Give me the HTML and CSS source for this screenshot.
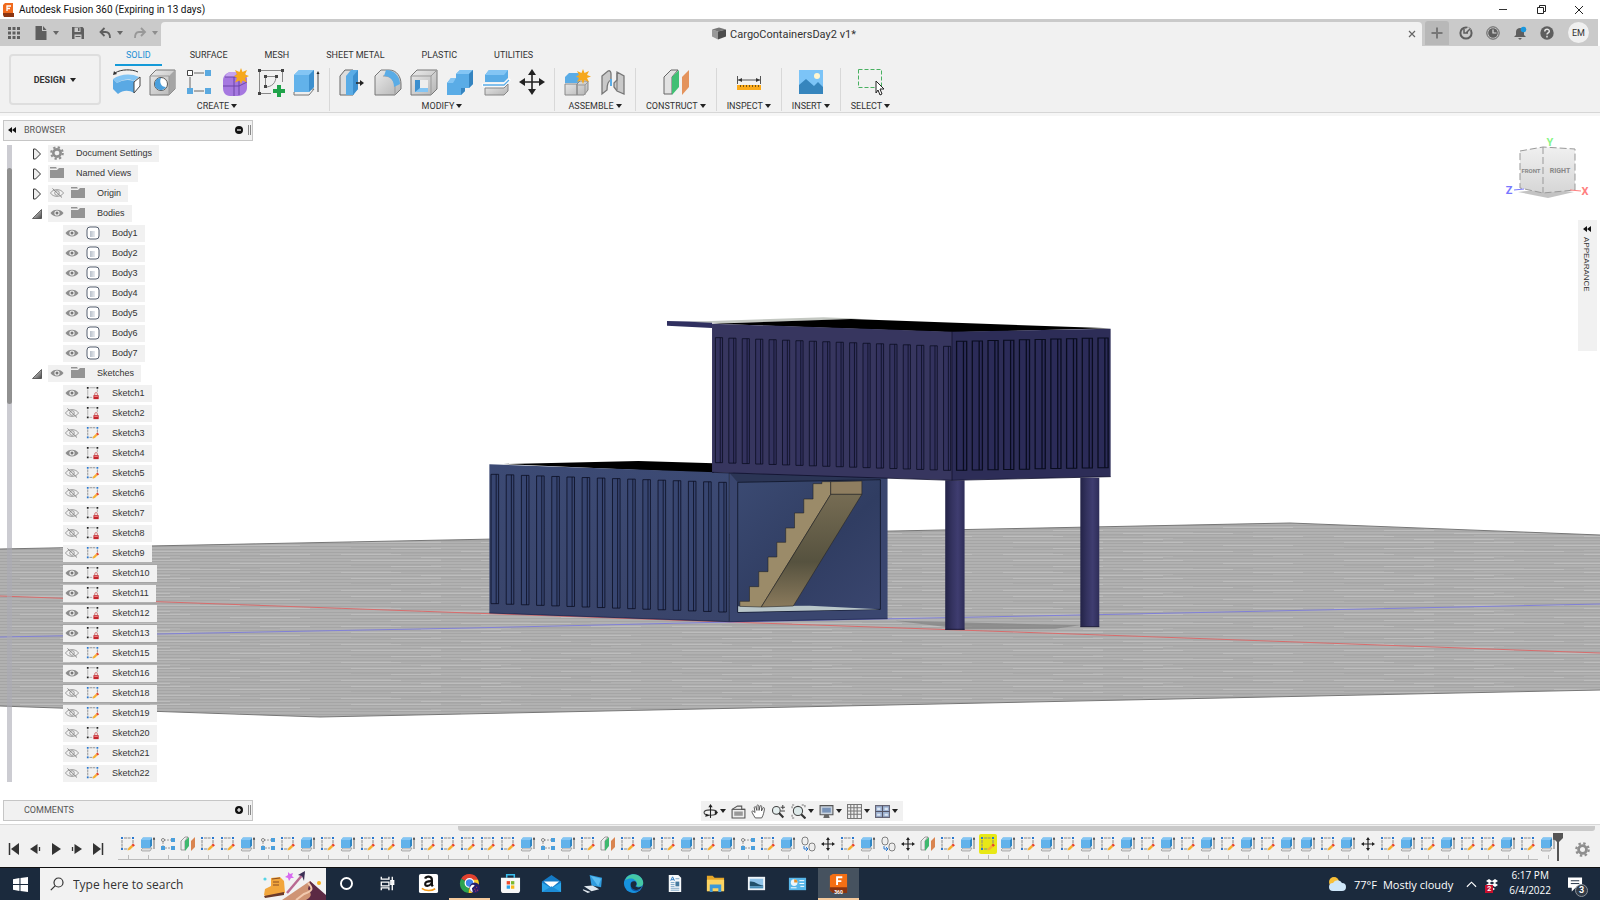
FILE: index.html
```html
<!DOCTYPE html>
<html lang="en">
<head>
<meta charset="utf-8">
<title>Autodesk Fusion 360</title>
<link rel="stylesheet" href="styles.css">
</head>
<body>
<svg class="defs" aria-hidden="true">
  <defs>
    <linearGradient id="gBlue" x1="0" y1="0" x2="1" y2="1"><stop offset="0" stop-color="#6dbbf0"/><stop offset="1" stop-color="#3f97d6"/></linearGradient>
    <linearGradient id="gGrey" x1="0" y1="0" x2="1" y2="1"><stop offset="0" stop-color="#ececec"/><stop offset="1" stop-color="#b4b4b4"/></linearGradient>
    <linearGradient id="gTri" x1="0" y1="0" x2="1" y2="1"><stop offset="0" stop-color="#fff"/><stop offset="1" stop-color="#444"/></linearGradient>
    <linearGradient id="gBody" x1="0" y1="0" x2="1" y2="0"><stop offset="0" stop-color="#b8c0ca"/><stop offset="1" stop-color="#e8ebef"/></linearGradient>
  </defs>
  <symbol id="sketch" viewBox="0 0 16 16"><path d="M2 4v8M4 2h7M13 4v4M4 13h4" fill="none" stroke="#888" stroke-dasharray="3 .6"/><path d="M1 1h2v2H1zM12 1h2v2h-2zM1 12h2v2H1z" fill="#2a78d0"/><path d="M7.500 14.500l.8-2.600 3.200-3 1.800 1.800-3.200 3z" fill="#f8b030"/><path d="M11.500 8.900l1.500-1.400 2 1.800-1.700 1.500z" fill="#e8402c"/></symbol>
  <symbol id="locked" viewBox="0 0 16 16"><path d="M2 4v7M4 2h7M13 4v3M4 13h3" fill="none" stroke="#aaa"/><path d="M1 1h2v2H1zM12 1h2v2h-2zM1 12h2v2H1z" fill="#222"/><path d="M10 10.500V9a1.500 1.500 0 0 1 3 0v1.500" fill="none" stroke="#c66"/><path d="M8.500 10.500h6V15h-6z" fill="#c4242c"/><path d="M9.500 11.500h4v1h-4z" fill="#e88"/></symbol>
  <symbol id="extrude" viewBox="0 0 16 16"><path d="M1 14l2-2h9l-2 3H2z" fill="#ddd" stroke="#888" stroke-width=".6"/><path d="M1 4l2-2.500h9L10 4v8H1z" fill="#62b2ea"/><path d="M10 4l2-2.500v8L10 12z" fill="#2f86c4"/><path d="M1 4l2-2.500h9L10 4z" fill="#83c5f4"/><path d="M14 13V3" stroke="#555" stroke-width=".8"/><path d="M12.800 3.500L14 1l1.200 2.500z" fill="#222"/></symbol>
  <symbol id="pattern" viewBox="0 0 16 16"><path d="M4 4h7M3 6v4M5 12h6" stroke="#999" stroke-dasharray="2 1"/><circle cx="3" cy="4" r="1.500" fill="#fff" stroke="#666" stroke-width=".8"/><path d="M11 2h4v4h-4zM11 10h4v4h-4zM1 10h4v4H1z" fill="#4b9fdc"/></symbol>
  <symbol id="plane" viewBox="0 0 16 16"><path d="M1 5l4-4h3L5 5v9H1z" fill="#eee" stroke="#777" stroke-width=".7"/><path d="M5 5l4-4v9l-4 5z" fill="#3fb86e"/><path d="M11 5l4-4v10l-4 4z" fill="#d98450"/></symbol>
  <symbol id="combine" viewBox="0 0 16 16"><rect x="2" y="1" width="6" height="8" rx="3" fill="#eee" stroke="#666" stroke-width=".8"/><rect x="9" y="7" width="6" height="8" rx="3" fill="#eee" stroke="#666" stroke-width=".8"/><path d="M4 10v3h3M6 11l2 2-2 2" fill="none" stroke="#2a78d0"/></symbol>
  <symbol id="move" viewBox="0 0 16 16"><path d="M8 3v10M3 8h10" stroke="#222" stroke-width="1.200"/><path d="M8 1l2 3H6zM8 15l2-3H6zM1 8l3-2v4zM15 8l-3-2v4z" fill="#222"/></symbol>
  <symbol id="eye" viewBox="0 0 14 12"><path d="M.5 6C3 1.500 11 1.500 13.500 6 11 10.500 3 10.500.5 6z" fill="#8c8c8c"/><circle cx="7" cy="6" r="2.600" fill="#f1f1f1"/><circle cx="7" cy="6" r="1.500" fill="#777"/></symbol>
  <symbol id="eyeoff" viewBox="0 0 14 12"><path d="M.5 6C3 1.500 11 1.500 13.500 6 11 10.500 3 10.500.5 6z" fill="none" stroke="#888" stroke-width=".8"/><circle cx="7" cy="6" r="2.300" fill="none" stroke="#888" stroke-width=".8"/><path d="M2.500 1.500l9.500 9" stroke="#888"/></symbol>
  <symbol id="folder" viewBox="0 0 14 12"><path d="M0 0h6l1 1.500H0zM0 3h7l2-2h5v10H0z" fill="#949494"/></symbol>
  <symbol id="gear" viewBox="0 0 16 16"><circle cx="8" cy="8" r="4.200" fill="none" stroke="#8e8e8e" stroke-width="3"/><circle cx="8" cy="8" r="6.600" fill="none" stroke="#8e8e8e" stroke-width="2.400" stroke-dasharray="2.600 2.580"/></symbol>
  <symbol id="body" viewBox="0 0 14 14"><rect x="1" y="1" width="12" height="12" rx="3" fill="#fff" stroke="#566070"/><path d="M4 5h5v6H4z" fill="url(#gBody)"/></symbol>
  <symbol id="closed" viewBox="0 0 10 12"><path d="M1.500 1h2l5 5-5 5h-2z" fill="#eee" stroke="#333"/></symbol>
  <symbol id="open" viewBox="0 0 10 12"><path d="M9.500 1.500v9H.5z" fill="url(#gTri)" stroke="#333" stroke-width=".7"/></symbol>
  <symbol id="rew" viewBox="0 0 8 6"><path d="M0 3l4-3v6zM4 3l4-3v6z" fill="#111"/></symbol>
</svg>

<header class="titlebar">
  <svg class="s12" viewBox="0 0 12 14"><path d="M1 2l2-2h8v11H1z" fill="#f06a1d"/><path d="M1 10h11v4H2L1 12z" fill="#8c3410"/><path d="M5 8V3h4M5 5.500h3" stroke="#fff" stroke-width="1.300" fill="none"/></svg>
  <h1>Autodesk Fusion 360 (Expiring in 13 days)</h1>
  <div class="winbtns">
    <button aria-label="Minimize"><svg class="s10" viewBox="0 0 10 10"><path d="M1 4.500h8" stroke="#333"/></svg></button>
    <button aria-label="Restore"><svg class="s10" viewBox="0 0 10 10"><path d="M1.500 2.500h6v6h-6zM3.500 2.500v-2h6v6h-2" fill="none" stroke="#222"/></svg></button>
    <button aria-label="Close"><svg class="s10" viewBox="0 0 10 10"><path d="M1 1l8 8M9 1L1 9" stroke="#222"/></svg></button>
  </div>
</header>

<div class="tabbar">
  <div class="quick">
    <button aria-label="Data panel"><svg class="s14" viewBox="0 0 14 14"><path d="M1 1h3v3H1zM5.500 1h3v3h-3zM10 1h3v3h-3zM1 5.500h3v3H1zM5.500 5.500h3v3h-3zM10 5.500h3v3h-3zM1 10h3v3H1zM5.500 10h3v3h-3zM10 10h3v3h-3z" fill="#5e5e5e"/></svg></button>
    <button aria-label="File" class="wide"><svg class="s14" viewBox="0 0 14 14"><path d="M1.500 0H8v5h4.500v9h-11zM9 0l3.500 4H9z" fill="#5e5e5e"/></svg><i class="caret dim"></i></button>
    <button aria-label="Save"><svg class="s14" viewBox="0 0 14 14"><path d="M1 1h10.500L13 2.500V13H1z" fill="#5e5e5e"/><path d="M3.500 1.500h6V6h-6zM3.500 8.500h7V13h-7z" fill="#cacaca"/><path d="M7 2h1.500v3H7zM4.500 10h5v1h-5z" fill="#5e5e5e"/></svg></button>
    <button aria-label="Undo" class="wide"><svg class="s14" viewBox="0 0 14 14"><path d="M6.500 2l-4 4 4 4M3 6h4.500c3 0 4.500 2 4.500 6" fill="none" stroke="#5e5e5e" stroke-width="1.800"/></svg><i class="caret dim"></i></button>
    <button aria-label="Redo" class="wide faded"><svg class="s14" viewBox="0 0 14 14"><path d="M8 2l4 4-4 4M11 6H6c-3 0-4 2-4 6" fill="none" stroke="#777" stroke-width="1.800"/></svg><i class="caret dim"></i></button>
  </div>
  <div class="doctab">
    <div class="docname"><svg class="s14" viewBox="0 0 14 13"><path d="M0 2l6 2v8L0 9z" fill="#999"/><path d="M0 2l7-2 7 2-8 2z" fill="#777"/><path d="M6 4l8-2v7l-8 3z" fill="#4c4c4c"/></svg>CargoContainersDay2 v1*</div>
    <button aria-label="Close tab"><svg class="s10" viewBox="0 0 10 10"><path d="M2 2l6 6M8 2L2 8" stroke="#666" stroke-width="1.200"/></svg></button>
  </div>
  <div class="account">
    <button class="plus" aria-label="New tab"><svg class="s14" viewBox="0 0 14 14"><path d="M7 1.500v11M1.500 7h11" stroke="#777" stroke-width="2"/></svg></button>
    <button aria-label="Extensions"><svg class="s14" viewBox="0 0 14 14"><circle cx="7" cy="7" r="5.600" fill="none" stroke="#5e5e5e" stroke-width="2"/><path d="M6 4l3 3 3.500-4L9 1z" fill="#cacaca"/><path d="M5 3v4h4M7.500 6.500l4-4" stroke="#5e5e5e" stroke-width="1.500" fill="none"/></svg></button>
    <button aria-label="Job status"><svg class="s14" viewBox="0 0 14 14"><circle cx="7" cy="7" r="6.200" fill="none" stroke="#5e5e5e"/><circle cx="7" cy="7" r="4.800" fill="#5e5e5e"/><path d="M7 3.500V7h3.500" stroke="#ddd" stroke-width="1.200" fill="none"/></svg></button>
    <button aria-label="Notifications"><svg class="s14" viewBox="0 0 14 14"><path d="M1 11l2-2V6c0-3 2-4 4-4s4 1 4 4v3l2 2zM5 12h4l-2 2z" fill="#5e5e5e"/><circle cx="10.500" cy="3.500" r="2.800" fill="#1a97dd"/></svg></button>
    <button aria-label="Help"><svg class="s14" viewBox="0 0 14 14"><circle cx="7" cy="7" r="6.700" fill="#5e5e5e"/><path d="M4.800 5.500c0-3 4.500-2.800 4.500-.3C9.300 7 7 6.800 7 8.600M7 9.800v1.600" fill="none" stroke="#e4e4e4" stroke-width="1.500"/></svg></button>
    <button class="avatar">EM</button>
  </div>
</div>

<div class="ribbon">
  <button class="design">DESIGN <i class="caret"></i></button>
  <div class="tools">
    <nav class="tabs">
      <a href="#" class="on">SOLID</a><a href="#">SURFACE</a><a href="#">MESH</a><a href="#">SHEET METAL</a><a href="#">PLASTIC</a><a href="#">UTILITIES</a>
    </nav>
    <div class="groups">
      <section class="group">
        <div class="icons">
          <button aria-label="Revolve"><svg viewBox="0 0 28 28"><path d="M2 5c6-4 17-4 23-1" fill="none" stroke="#333"/><path d="M0 7l1-4 3 3z" fill="#333"/><path d="M0 11C7 6 18 5 26 9l-5 4C15 10 9 12 4 15z" fill="#83c5f4"/><path d="M0 11l4 4c5-3 11-4 17-2v12c-5-3-11-3-16 1L0 21z" fill="#5aa9e4"/><path d="M21 14l6-5v9l-6 7z" fill="#fff" stroke="#444"/></svg></button>
          <button aria-label="Hole"><svg viewBox="0 0 28 28"><path d="M1 8l6-6h19v19l-6 6H1z" fill="url(#gGrey)" stroke="#777"/><path d="M20 8l6-6v19l-6 6z" fill="#a5a5a5"/><path d="M1 8h19v19" fill="none" stroke="#999"/><circle cx="12" cy="16" r="6.500" fill="#fff" stroke="#555"/><path d="M12 10a6 6 0 1 0 5 9c-5 0-7-5-5-9z" fill="#4b9fdc"/></svg></button>
          <button aria-label="Pattern"><svg viewBox="0 0 28 28"><path d="M9 5h10M5 9v11M9 23h10" stroke="#666"/><path d="M2.500 2.500h5v5h-5z" fill="#fff" stroke="#444"/><path d="M20 2h6v6h-6zM20 20h6v6h-6zM2 20h6v6H2z" fill="#5aa9e0"/></svg></button>
          <button aria-label="Create form"><svg viewBox="0 0 28 28"><path d="M2 12c0-4 4-8 8-8h10c4 0 6 4 6 8v8c0 4-4 8-9 8H9c-5 0-7-4-7-8z" fill="#a678e0"/><path d="M10 4h9c-3 1-5 3-6 5H4c1-3 3-5 6-5z" fill="#c5a3f0"/><path d="M2 18h16l8-4M13 9v19M4 9h13l6-3M18 10v17" stroke="#6d45a8" fill="none"/><path d="M20 0l1.500 4L26 2l-2 4.500 4 1.500-4 2 2 4.500-4.500-2L20 16l-1.500-3.500-4.500 2 2-4.500-3-2 3-1.500L14 2l4.500 2z" fill="#f6a81c"/></svg></button>
          <button aria-label="Create sketch"><svg viewBox="0 0 28 28"><path d="M4 2.500h20M2.500 4v20M25.500 4v10M4 25.500h10M8.500 8.500h10M8.500 8.500v10M8 19c7 0 11-4 11-11" fill="none" stroke="#888"/><path d="M1 1h3v3H1zM24 1h3v3h-3zM1 24h3v3H1zM7 7h3v3H7zM18 7h3v3h-3zM7 17h3v3H7z" fill="#444"/><path d="M20 17h4v4h4v4h-4v4h-4v-4h-4v-4h4z" fill="#1fa34a"/></svg></button>
          <button aria-label="Extrude"><svg viewBox="0 0 28 28"><path d="M1 24l6-3h14l-5 6H1z" fill="#eee" stroke="#777"/><path d="M1 7l5-5h15v17l-5 5H1z" fill="#62b2ea"/><path d="M1 7l5-5h15l-5 5z" fill="#83c5f4"/><path d="M16 7l5-5v17l-5 5z" fill="#3c8fce"/><path d="M25 24V5" stroke="#444"/><path d="M23.500 6L25 3l1.500 3z" fill="#222"/></svg></button>
        </div>
        <button class="label">CREATE <i class="caret"></i></button>
      </section>
      <section class="group">
        <div class="icons">
          <button aria-label="Press pull"><svg viewBox="0 0 28 28"><path d="M2 8l5-6h8v25H2z" fill="#ddd" stroke="#666"/><path d="M8 8l5-6h7v19l-5 6H8z" fill="#5aace6"/><path d="M15 8l5-6v19l-5 6z" fill="#3c8fce"/><path d="M18 15h6" stroke="#222" stroke-width="1.500"/><path d="M22 12l4 3-4 3z" fill="#222"/></svg></button>
          <button aria-label="Fillet"><svg viewBox="0 0 28 28"><path d="M1 8l6-6h8c8 0 12 7 12 14v5l-6 6H1z" fill="url(#gGrey)" stroke="#777"/><path d="M9 8h2c6 0 10 5 10 11v8" fill="none" stroke="#999"/><path d="M12 2c9 0 14 7 14 14l-6 3c0-7-4-11-10-11z" fill="#5aace6"/></svg></button>
          <button aria-label="Shell"><svg viewBox="0 0 28 28"><path d="M1 8l6-6h20v19l-6 6H1z" fill="url(#gGrey)" stroke="#777"/><path d="M1 8h20v19M21 8l6-6" fill="none" stroke="#999"/><path d="M5 12h13v12H5z" fill="#3c8fce"/><path d="M10 12h8v8h-8z" fill="#eee"/><path d="M5 24l5-4h8v4z" fill="#83c5f4"/></svg></button>
          <button aria-label="Combine"><svg viewBox="0 0 28 28"><path d="M1 15l4-5h5V6l4-4h13v14l-4 4h-4v3l-4 4H1z" fill="#5aace6"/><path d="M1 15l4-5h5l-3 5zM10 6l4-4h13l-4 4z" fill="#83c5f4"/><path d="M23 6l4-4v14l-4 4zM15 20h4v3l-4 4z" fill="#3584c0"/></svg></button>
          <button aria-label="Offset face"><svg viewBox="0 0 28 28"><path d="M3 7l4-5h19v8l-4 4H3z" fill="#5aace6"/><path d="M3 7l4-5h19l-4 5z" fill="#83c5f4"/><path d="M0 17h22l6-6" fill="none" stroke="#fff" stroke-width="3"/><path d="M1 17h21l5-5" fill="none" stroke="#5aace6" stroke-width="1.300"/><path d="M3 20h19l4-4v7l-4 4H3z" fill="url(#gGrey)" stroke="#888"/></svg></button>
          <button aria-label="Move"><svg viewBox="0 0 28 28"><path d="M14 5v18M5 14h18" stroke="#222" stroke-width="1.600"/><path d="M14 1l4 6h-8zM14 27l4-6h-8zM1 14l6-4v8zM27 14l-6-4v8z" fill="#222"/></svg></button>
        </div>
        <button class="label">MODIFY <i class="caret"></i></button>
      </section>
      <section class="group">
        <div class="icons">
          <button aria-label="New component"><svg viewBox="0 0 28 28"><path d="M2 9l4-4h10v10H2z" fill="#5aace6"/><path d="M2 16h12v11H2zM14 16l3-3h8v9l-4 5h-7z" fill="url(#gGrey)" stroke="#888"/><path d="M14 17h8v10M22 17l3-3" fill="none" stroke="#999"/><path d="M20 1l1.500 4L26 3l-2 4 4 1.500L24 10l2 4-4.500-2L20 16l-1.500-4-4.500 2 2-4-3-1.500L16 7l-2-4 4.500 2z" fill="#f6a81c"/></svg></button>
          <button aria-label="Joint"><svg viewBox="0 0 28 28"><path d="M3 8l6-5c2-1 3 1 3 3v6c-3 1-4 4-4 10l-5 4zM18 12l-3 3v4l3 4 7 3V8l-7-4z" fill="#c9c9c9" stroke="#777" stroke-width="1.300"/><path d="M18 5v17" stroke="#777"/><path d="M12 11v7" stroke="#5aace6" stroke-width="2"/></svg></button>
        </div>
        <button class="label">ASSEMBLE <i class="caret"></i></button>
      </section>
      <section class="group narrow">
        <div class="icons"><button aria-label="Construct plane"><svg viewBox="0 0 28 28"><path d="M2 9l7-7h7l-6 7v17H2z" fill="#e2e2e2" stroke="#666"/><path d="M10 9l7-7v17l-7 8z" fill="#41bf74"/><path d="M20 9l7-7v17l-7 8z" fill="#e4935c"/></svg></button></div>
        <button class="label">CONSTRUCT <i class="caret"></i></button>
      </section>
      <section class="group narrow">
        <div class="icons"><button aria-label="Measure"><svg viewBox="0 0 28 28"><path d="M2.500 8v8M25.500 8v8M3 12h22" stroke="#555"/><path d="M3 12l4-2v4zM25 12l-4-2v4z" fill="#333"/><path d="M2 17h24v5H2z" fill="#fbab1c"/><path d="M5.500 17v2M8.500 17v2M11.500 17v2M14.500 17v2M17.500 17v2M20.500 17v2M23.500 17v2" stroke="#7a5510"/></svg></button></div>
        <button class="label">INSPECT <i class="caret"></i></button>
      </section>
      <section class="group narrow">
        <div class="icons"><button aria-label="Insert"><svg viewBox="0 0 28 28"><path d="M2 2h24v24H2z" fill="#7cc4f7"/><path d="M2 17l7-6 8 7 4-4 5 5v7H2z" fill="#3685bd"/><circle cx="20" cy="8" r="3" fill="#fff6d0"/></svg></button></div>
        <button class="label">INSERT <i class="caret"></i></button>
      </section>
      <section class="group narrow last">
        <div class="icons"><button aria-label="Select"><svg viewBox="0 0 28 28"><path d="M2.500 1.500h23v18h-23z" fill="none" stroke="#49b061" stroke-dasharray="4 2"/><path d="M20 13l8 8h-4l2 5-2 1-2-5-2 3z" fill="#fff" stroke="#222"/></svg></button></div>
        <button class="label">SELECT <i class="caret"></i></button>
      </section>
    </div>
  </div>
</div>

<main class="view">
  <svg class="scene" viewBox="0 116 1600 709" preserveAspectRatio="none" role="img" aria-label="Two stacked cargo containers">
    <defs>
      <pattern id="lines" width="331" height="18" patternUnits="userSpaceOnUse">
        <rect width="331" height="18" fill="#b1b1b1"/>
        <path d="M0 .5h331M0 3.500h331M0 6.500h331M0 9.500h331M0 12.500h331M0 15.500h331" stroke="#a5a5a5"/>
        <path d="M20 2.500h90M150 2.500h40M230 5.500h70M60 8.500h50M130 11.500h110M10 14.500h60M260 14.500h50M90 17.500h80" stroke="#bdbdbd"/>
        <path d="M110 1.500h60M20 7.500h80M200 10.500h60M60 13.500h90M180 16.500h100" stroke="#aaa"/>
      </pattern>
      <linearGradient id="inner" x1="0" y1="0" x2="1" y2="1"><stop offset="0" stop-color="#3b4a72"/><stop offset=".55" stop-color="#303d62"/><stop offset="1" stop-color="#3a466f"/></linearGradient>
      <linearGradient id="lower" x1="0" y1="0" x2="0" y2="1"><stop offset="0" stop-color="#3c4a74"/><stop offset="1" stop-color="#39446a"/></linearGradient>
      <linearGradient id="col" x1="0" y1="0" x2="1" y2="0"><stop offset="0" stop-color="#232347"/><stop offset=".35" stop-color="#343360"/><stop offset=".65" stop-color="#3f3d70"/><stop offset="1" stop-color="#2e2d58"/></linearGradient>
      <linearGradient id="under" x1="0" y1="0" x2="0" y2="1"><stop offset="0" stop-color="#766c53"/><stop offset=".6" stop-color="#56523f"/><stop offset="1" stop-color="#8a7a5c"/></linearGradient>
      <linearGradient id="cubeShade" x1="0" y1="0" x2="0" y2="1"><stop offset="0" stop-color="#f0f0f0"/><stop offset="1" stop-color="#d6d6d6"/></linearGradient>
    </defs>
    <path d="M0 549L1290 523 1600 535V690L320 717 0 706z" fill="url(#lines)"/>
    <path d="M0 549L1290 523 1600 535M0 706l320 11L1600 690" fill="none" stroke="#777"/>
    <path d="M0 596L470 613 729 622 1130 636 1600 653" fill="none" stroke="#d86c6c"/>
    <path d="M0 637L470 628 729 622 1130 614 1600 604" fill="none" stroke="#8080d8"/>
    <svg id="model" x="470" y="300" width="660" height="350" viewBox="0 0 1568 1050" preserveAspectRatio="none">
      <path d="M1010 962l440 14-60 10-215 2z" fill="#808080" opacity=".7"/>
      <path d="M80 492L400 483l180 7v30z" fill="#000"/>
      <path d="M46 493l570 25v447L46 939z" fill="url(#lower)"/>
      <path d="M616 518l376 12v426l-376 9z" fill="#3a466f"/>
      <path d="M616 518l376 16-80 5-276 8z" fill="#2b3555"/>
      <path d="M636 547l339-8v389l-339 9z" fill="url(#inner)" stroke="#0b1020" stroke-width="2"/>
      <path d="M637 919l170-2 167 11-337 8z" fill="#b9c6c9"/>
      <path d="M641 919v-15h23v-44h22v-45h22v-44h21v-44h21v-43h21v-45h22v-42h22v-46h21v-6h21v38L692 921z" fill="#9b8b69" stroke="#222" stroke-width="1.500"/>
      <path d="M857 545l74-2v40h-74z" fill="#8f7e60" stroke="#222" stroke-width="1.500"/>
      <path d="M857 583h74L768 918l-76 3z" fill="url(#under)" stroke="#222" stroke-width="1.500"/>
      <path d="M616 518v447" stroke="#111a33" stroke-width="2"/>
      <path d="M46 939l570 26 376-9" fill="none" stroke="#18204a" stroke-width="2"/>
      <path d="M468 63l107 3v18l-107-7z" fill="#303060"/>
      <path d="M520 65L840 52l90 4-330 14z" fill="#c4c8c2"/>
      <path d="M575 71l330-14 617 28-377 12z" fill="#000"/>
      <path d="M575 71l570 24v446l-570-24z" fill="#37365f"/>
      <path d="M1145 95l377-9v444l-377 11z" fill="#2d2d57"/>
      <path d="M1129 541h46v448h-46z" fill="url(#col)"/>
      <path d="M1450 533h45v447h-45z" fill="url(#col)"/>
      <path d="M1129 988h46M1450 980h45M575 517l570 24 377-11M1145 95v446" fill="none" stroke="#0c0c28" stroke-width="2"/>
      <g id="ribs"></g>
    </svg>
    <g class="cube">
      <path d="M1518 192l26-3 30 3-26 6z" fill="#a9a9a9" opacity=".7"/>
      <path d="M1520 151l23-4v46l-23-5z" fill="url(#cubeShade)"/>
      <path d="M1543 147l32 2v41l-32 3z" fill="url(#cubeShade)"/>
      <path d="M1520 151l23-4 32 2v41l-32 3-23-5zM1543 147v46" fill="none" stroke="#999" stroke-dasharray="7 3"/>
      <path d="M1514 190l10-1" stroke="#7878ff"/><path d="M1570 190l11 1" stroke="#ff8080"/>
      <text x="1531" y="173" class="face front">FRONT</text><text x="1560" y="173" class="face">RIGHT</text>
      <text x="1550" y="146" class="axis y">Y</text><text x="1509" y="194" class="axis z">Z</text><text x="1585" y="195" class="axis x">X</text>
    </g>
  </svg>

  <aside class="browser">
    <div class="panelhead"><svg class="rew"><use href="#rew"/></svg><h2>BROWSER</h2><button aria-label="Collapse browser"><svg class="s10" viewBox="0 0 10 10"><circle cx="5" cy="5" r="4" fill="#111"/><path d="M3 5h4" stroke="#fff" stroke-width="1.200"/></svg></button><span class="grip"></span></div>
    <div class="treewrap"><div class="scroll"><div class="thumb"></div></div><ul id="tree" class="tree"></ul></div>
  </aside>
  <aside class="appearance"><svg class="rew"><use href="#rew"/></svg><span>APPEARANCE</span></aside>
  <div class="bottom">
    <div class="panelhead comments"><h2>COMMENTS</h2><button aria-label="Expand comments"><svg class="s10" viewBox="0 0 10 10"><circle cx="5" cy="5" r="4" fill="#111"/><path d="M3 5h4M5 3v4" stroke="#fff" stroke-width="1.200"/></svg></button><span class="grip"></span></div>
    <div class="navbar">
      <button aria-label="Orbit"><svg viewBox="0 0 14 14"><ellipse cx="7" cy="8" rx="6" ry="2.500" fill="none" stroke="#444"/><path d="M7 1v12" stroke="#222"/><path d="M5 3l2-3 2 3zM11 6l3 2-3 2zM3 9l-1 3 4-1z" fill="#222"/></svg><i class="caret"></i></button>
      <button aria-label="Look at"><svg viewBox="0 0 14 14"><path d="M1 5l5-3h4v3h3v8H1z" fill="#eee" stroke="#555"/><path d="M3 7h8v4H3z" fill="#999"/><path d="M1 5h12" stroke="#555"/></svg></button>
      <button aria-label="Pan"><svg viewBox="0 0 14 14"><path d="M4 13C2 10 1 8 .8 7c.5-1 2 0 3 1L3 3c.6-1 1.400-.5 1.700.3L5.500 6V1.500c.5-.8 1.500-.7 1.800.2L7.500 6l1-4.200c.6-.7 1.400-.3 1.500.5L9.800 6.500l1.500-3c.8-.4 1.400.2 1.300.8-.4 3-1 6-2.600 8.700z" fill="#fff" stroke="#444" stroke-width=".8"/></svg></button>
      <button aria-label="Zoom"><svg viewBox="0 0 14 14"><circle cx="5" cy="6" r="3.600" fill="#e4eeee" stroke="#444"/><path d="M7.500 8.500l4 4" stroke="#333" stroke-width="2"/><path d="M9 3h4M11 1v4M9 6.500h4" stroke="#444"/></svg></button>
      <button aria-label="Fit"><svg viewBox="0 0 14 14"><path d="M1 4V1h3M10 1h3v3M1 10v3h3" fill="none" stroke="#777" stroke-dasharray="2 1"/><circle cx="6.500" cy="6.500" r="4.300" fill="#dce9e9" stroke="#444"/><path d="M9.500 9.500l4 4" stroke="#333" stroke-width="2"/></svg><i class="caret"></i></button>
      <button aria-label="Display settings"><svg viewBox="0 0 14 14"><path d="M1 1.500h12v8.500H1z" fill="#c9d2dd" stroke="#555"/><path d="M3 3.500h8v4.500H3z" fill="#7893b8"/><path d="M5 10h4l1 3H4z" fill="#666"/></svg><i class="caret"></i></button>
      <button aria-label="Grid settings"><svg viewBox="0 0 14 14"><path d="M.5.5h13v13H.5zM3.500 0v14M6.500 0v14M9.500 0v14M.5 3.500h13M.5 6.500h13M.5 9.500h13" fill="none" stroke="#777"/></svg><i class="caret"></i></button>
      <button aria-label="Viewports"><svg viewBox="0 0 14 14"><path d="M.5 1.500h13v11H.5z" fill="#9fb4d4" stroke="#667"/><path d="M7 1.500v11M.5 7h13" stroke="#556"/><path d="M2 3.500h3v2H2zM9 3.500h3v2H9zM2 9h3v2H2zM9 9h3v2H9z" fill="#dce5f2"/></svg><i class="caret"></i></button>
    </div>
  </div>
</main>

<section class="timeline">
  <div class="hscroll"><div></div></div>
  <div class="tlrow">
    <div class="play">
      <button aria-label="First"><svg viewBox="0 0 12 12"><path d="M1.500 0v12" stroke="#333" stroke-width="1.500"/><path d="M11 0v12L3 6z" fill="#333"/></svg></button>
      <button aria-label="Back"><svg viewBox="0 0 12 12"><path d="M8.500 1v10L1 6z" fill="#333"/><path d="M10.500 4v4" stroke="#333" stroke-width="1.300"/></svg></button>
      <button aria-label="Play"><svg viewBox="0 0 12 12"><path d="M2 0v12l9-6z" fill="#333"/></svg></button>
      <button aria-label="Forward"><svg viewBox="0 0 12 12"><path d="M3.500 1v10L11 6z" fill="#333"/><path d="M1.500 4v4" stroke="#333" stroke-width="1.300"/></svg></button>
      <button aria-label="Last"><svg viewBox="0 0 12 12"><path d="M10.500 0v12" stroke="#333" stroke-width="1.500"/><path d="M1 0v12l8-6z" fill="#333"/></svg></button>
    </div>
    <ol id="features" class="features"></ol>
    <svg class="marker" viewBox="0 0 10 28"><path d="M0 0h10v5L6 9v19H4V9L0 5z" fill="#555"/></svg>
    <button class="tlgear" aria-label="Timeline settings"><svg><use href="#gear"/></svg></button>
  </div>
</section>

<footer class="taskbar">
  <button class="start" aria-label="Start"><svg viewBox="0 0 14 14"><path d="M0 2l6-1v5.500H0zM7 .9L14 0v6.500H7zM0 7.500h6V13l-6-1zM7 7.500h7V14l-7-.9z" fill="#fff"/></svg></button>
  <label class="search"><svg class="lens" viewBox="0 0 14 14"><circle cx="8.500" cy="5.500" r="4.500" fill="none" stroke="#333" stroke-width="1.200"/><path d="M5.300 8.700L.8 13.200" stroke="#333" stroke-width="1.200"/></svg><input type="text" placeholder="Type here to search" aria-label="Search"><svg class="art" viewBox="0 0 64 31"><path d="M2 26l1-6 6-3V9l9-1 4 4 1 12-18 4z" fill="#f2a63c"/><path d="M2 27l20-4v3L3 29z" fill="#6b3a2a"/><path d="M10 10l8-1M11 13h6M11 16h6" stroke="#8c4d20"/><circle cx="3" cy="10" r="1.600" fill="#55d4e6"/><path d="M26 3l2 2 3-1-1 3 2 2-3 0-2 3-1-3-3-1 3-2z" fill="#d86af0"/><path d="M20 31L48 12l16 16v3z" fill="#cf9474"/><path d="M48 12l16 14v5H44c8-4 4-8 2-11z" fill="#5c2a44"/><path d="M46 14c6 6 4 8-4 11l-8 6" fill="none" stroke="#f1c9ae" stroke-width="2"/><path d="M25 24L42 4" stroke="#b96a92" stroke-width="2.500"/><path d="M36 6l7-4-1 10-2-5z" fill="#3a2f55"/><circle cx="57" cy="14" r="2" fill="#f8b21c"/></svg></label>
  <nav class="apps">
    <button aria-label="Cortana"><svg viewBox="0 0 22 22"><circle cx="11" cy="11" r="5.800" fill="none" stroke="#fff" stroke-width="2"/></svg></button>
    <button aria-label="Task view"><svg viewBox="0 0 22 22"><path d="M4.500 4v2.500h8V4M4.500 9.500h8v4h-8zM4.500 18v-2.500h8V18M16 4v14M14.500 8h3v4h-3z" fill="none" stroke="#fff" stroke-width="1.400"/></svg></button>
    <button aria-label="Amazon"><svg viewBox="0 0 22 22"><rect x="1" y="1" width="20" height="20" rx="2" fill="#fff"/><path d="M7.500 6c1-3 7-3 7 1v5.500l1 1.500" fill="none" stroke="#111" stroke-width="2.400"/><path d="M14 8.500c-4 0-6.500.5-6.500 3s4 3 6.500-.5" fill="none" stroke="#111" stroke-width="2.200"/><path d="M4 16c4 3 10 3 14 .5" fill="none" stroke="#f39b1c" stroke-width="1.600"/></svg></button>
    <button aria-label="Chrome" class="running"><svg viewBox="0 0 22 22"><path d="M11 11L2.300 6A10 10 0 0 1 20 7z" fill="#e2412f"/><path d="M11 11L2.300 6A10 10 0 0 0 10 21z" fill="#2ca350"/><path d="M11 11l-1 10A10 10 0 0 0 20 7h-9z" fill="#f8cb2c"/><circle cx="11" cy="10.500" r="4.500" fill="#3f83ec" stroke="#fff" stroke-width="1.300"/><circle cx="16.500" cy="15.500" r="5.500" fill="#26206e"/><path d="M11.500 16c0-3 3-5 5-3l-3 3 1 4c-2 0-3-2-3-4z" fill="#fff"/><path d="M16 17h1M18 15h1M19 18h1M17 19h1" stroke="#e44" stroke-width="1"/></svg></button>
    <button aria-label="Store"><svg viewBox="0 0 22 22"><path d="M7 5V1.800h8V5" fill="none" stroke="#39c0f0" stroke-width="1.600"/><path d="M1 5h20v13a3 3 0 0 1-3 3H4a3 3 0 0 1-3-3z" fill="#f7f7f7"/><path d="M7 8.500h3.500V12H7z" fill="#ee4b2b"/><path d="M11.500 8.500H15V12h-3.500z" fill="#7cb82f"/><path d="M7 13h3.500v3.500H7z" fill="#2ba3e8"/><path d="M11.500 13H15v3.500h-3.500z" fill="#f8b91c"/></svg></button>
    <button aria-label="Mail"><svg viewBox="0 0 22 22"><path d="M1 9l10-7 10 7v11H1z" fill="#1479c4"/><path d="M3 9h16l-8 6.500z" fill="#fff"/><path d="M1 10l10 6 10-6v10H1z" fill="#2ba5ea"/><path d="M1 20l10-6 10 6z" fill="#1d8cd6"/></svg></button>
    <button aria-label="Remote PC"><svg viewBox="0 0 22 22"><path d="M8 2l13 3-1 10-10-2z" fill="#2f9cdf"/><path d="M9 3l11 3-3 8z" fill="#5cbdf1"/><path d="M2 14l9-1 7 4-8 2zM1 17l8 3-3 1-5-3z" fill="#dfe7ee"/></svg></button>
    <button aria-label="Edge"><svg viewBox="0 0 22 22"><circle cx="11" cy="11" r="10" fill="#1c7fd0"/><path d="M2 8C4 2 10 0 15 2c5 2 7 7 6 10-1 2-4 3-7 2 2-3 0-7-4-7-4 0-7 1-8 1z" fill="#45c8a6"/><path d="M1 10c1-4 9-6 12-2-4-1-6 2-5 6 1 3 4 5 8 5-5 4-14 1-15-9z" fill="#1692de"/><path d="M8 12c0-3 3-4 5-3 2 2 1 4 0 5 2 2 5 1 7 0-2 5-12 6-12-2z" fill="#1b2a3d"/><path d="M8 14c1 3 5 5 10 3-4 4-10 2-10-3z" fill="#0f55a6"/></svg></button>
    <button aria-label="WordPad"><svg viewBox="0 0 22 22"><path d="M5 2h10l3 3v15H5z" fill="#f6f9fb"/><path d="M7 8l2-4 2 4M7.500 7h3" stroke="#2c7cc4" fill="none"/><path d="M7 10h4M7 12h4M7 14h4M7 16h9M7 18h9M12 6h4" stroke="#7aa5c5"/><path d="M12 9h4v5h-4z" fill="#45799e"/></svg></button>
    <button aria-label="File Explorer"><svg viewBox="0 0 22 22"><path d="M2 3h6l2 2h10v14H2z" fill="#e5a629"/><path d="M2 7h18v12H2z" fill="#fcd462"/><path d="M5 20v-8h12v8h-3v-4H8v4z" fill="#3c99d8"/></svg></button>
    <button aria-label="Photos"><svg viewBox="0 0 22 22"><path d="M2 4h18v14H2z" fill="#eef3f7"/><path d="M4 6h14v10H4z" fill="#8fc4ea"/><path d="M4 9c5-1 9 4 14 4v1H4z" fill="#20506b"/><path d="M4 14h14v2H4z" fill="#4a8fb8"/></svg></button>
    <button aria-label="Control Panel"><svg viewBox="0 0 22 22"><path d="M2 5h18v13H2z" fill="#58b7ea"/><circle cx="7.500" cy="10" r="3.500" fill="#eaf6fd"/><path d="M7.500 10V6.500A3.500 3.500 0 0 1 11 10z" fill="#e6912c"/><path d="M13 8h5M13 11h5M14 14h4M4 15.500h6" stroke="#fff"/></svg></button>
    <button aria-label="Fusion 360" class="running active"><svg viewBox="0 0 22 22"><path d="M2 3l3-2h15v19H4l-2-2z" fill="#f46f14"/><path d="M2 15h18v6H5l-3-3z" fill="#8a3410"/><path d="M9.500 12.500V4.500H15M9.500 8.500h4.500" stroke="#fff" stroke-width="2" fill="none"/></svg><b>360</b></button>
  </nav>
  <div class="tray">
    <svg class="weather" viewBox="0 0 18 16"><circle cx="6" cy="6" r="5" fill="#f8bf38"/><path d="M5 15a4 4 0 0 1 0-8 5 5 0 0 1 9 0 4 4 0 0 1 0 8z" fill="#cfe7fa"/></svg>
    <span class="temp">77°F</span><span>Mostly cloudy</span>
    <svg class="up" viewBox="0 0 12 8"><path d="M1 7l5-5 5 5" fill="none" stroke="#fff" stroke-width="1.200"/></svg>
    <span class="drop"><svg viewBox="0 0 14 13"><path d="M1 3l3-2 3 2 3-2 3 2-3 2 3 2-3 2-3-2-3 2-3-2 3-2zM4 11l3-2 3 2-3 2z" fill="#fff"/><path d="M7 3.500L9.500 5 7 6.500 4.500 5z" fill="#1b2a3d"/></svg><b>2</b></span>
    <time class="clock">6:17 PM<br>6/4/2022</time>
    <button class="notes" aria-label="Notifications"><svg viewBox="0 0 16 15"><path d="M0 0h15v11H8l-4 4v-4H0z" fill="#fff"/><path d="M3 3.500h9M3 6.500h9" stroke="#1b2a3d"/></svg><b>3</b></button>
  </div>
</footer>
<script src="app.js"></script>
</body>
</html>
```
FILE: styles.css
```css
* { box-sizing: border-box; }
html, body { height: 100%; }
body { margin: 0; display: flex; flex-direction: column; overflow: hidden; background: #fff; color: #333; font-family: "Liberation Sans", Arial, sans-serif; font-size: 9px; }
button { border: 0; background: none; padding: 0; margin: 0; color: inherit; font: inherit; display: inline-flex; align-items: center; justify-content: center; }
svg { display: block; flex: none; }
h1, h2, ul, ol { margin: 0; padding: 0; font-weight: normal; list-style: none; }
a { color: inherit; text-decoration: none; }
.defs { position: absolute; width: 0; height: 0; }
.s10 { width: 10px; height: 10px; }
.s12 { width: 12px; height: 14px; }
.s14 { width: 14px; height: 14px; }
.caret { display: inline-block; flex: none; border: 3px solid transparent; border-top: 4px solid #222; border-bottom: 0; }
.caret.dim { border-top-color: #666; }

.titlebar { height: 19px; flex: none; display: flex; align-items: center; gap: 5px; padding-left: 2px; }
.titlebar h1 { font: 10px/18px Roboto, sans-serif; color: #111; }
.winbtns { margin-left: auto; display: flex; padding-right: 2px; }
.winbtns button { width: 38px; height: 18px; }

.tabbar { height: 27px; flex: none; display: flex; background: #cacaca; margin-right: 2px; }
.quick { width: 161px; display: flex; align-items: center; padding-left: 4px; }
.quick button { width: 20px; margin-right: 9px; flex: none; }
.quick .wide { width: 26px; gap: 5px; }
.faded { opacity: .6; }
.doctab { flex: 1; display: flex; align-items: center; background: #f1f1f1; margin-top: 3px; border-radius: 4px 4px 0 0; padding-right: 5px; }
.docname { flex: 1; display: flex; justify-content: center; align-items: center; gap: 4px; font: 11px Roboto, sans-serif; }
.account { display: flex; align-items: center; margin-left: 3px; padding-right: 9px; }
.account button { width: 27px; height: 24px; }
.account .plus { width: 24px; background: #b8b8b8; margin-right: 3px; border-radius: 3px 3px 0 0; }
.account .avatar { width: 21px; height: 21px; border-radius: 50%; background: #f0f0f0; font: 9px Roboto, sans-serif; margin-left: 8px; }

.ribbon { height: 70px; flex: none; display: flex; background: #f1f1f1; border-bottom: 3px solid #f6f6f6; box-shadow: inset 0 -1px #d6d6d6; font-family: Roboto, sans-serif; }
.design { width: 92px; height: 51px; margin: 8px 4px 0 9px; border: 2px solid #dedede; border-radius: 4px; font-weight: bold; gap: 5px; }
.tools { display: flex; flex-direction: column; }
.tabs { display: flex; height: 20px; padding-left: 10px; }
.tabs a { padding: 0 9px; margin-right: 19px; line-height: 18px; border-bottom: 2px solid transparent; }
.tabs .on { padding: 0 11px; color: #1b8fd4; border-color: #149ad8; }
.groups { display: flex; padding-top: 2px; }
.group { display: flex; flex-direction: column; align-items: center; padding: 0 8px; border-right: 1px solid #d8d8d8; height: 43px; }
.group.narrow { padding: 0 10px; }
.group.last { border: 0; }
.icons { display: flex; gap: 8px; height: 28px; }
.icons svg { width: 28px; height: 28px; overflow: visible; }
.label { height: 12px; margin-top: 4px; gap: 2px; white-space: nowrap; flex: none; }

.view { flex: 1; min-height: 0; position: relative; display: flex; flex-direction: column; }
.scene { position: absolute; inset: 0; width: 100%; height: 100%; }
.face { font: bold 7px Roboto, sans-serif; fill: #888; text-anchor: middle; }
.face.front { font-size: 6px; }
.axis { font: bold 11px Roboto, sans-serif; text-anchor: middle; }
.axis.x { fill: #ff8080; } .axis.y { fill: #86f586; } .axis.z { fill: #7878ff; }
.browser { position: relative; width: 250px; margin: 4px 0 0 3px; }
.panelhead { height: 21px; display: flex; align-items: center; background: #f1f1f1; border: 1px solid #c6c6c6; padding: 0 1px 1px 4px; }
.panelhead h2 { font: 9px Roboto, sans-serif; color: #555; margin-left: 8px; flex: 1; }
.rew { width: 8px; height: 6px; }
.grip { width: 3px; height: 10px; border: 1px solid #888; border-width: 0 1px; margin-left: 4px; }
.treewrap { display: flex; padding: 4px 0 0 4px; }
.scroll { width: 5px; background: rgba(170, 170, 180, .6); padding-top: 23px; }
.thumb { height: 236px; background: #909090; border-radius: 3px; }
.tree { padding-left: 19px; }
.tree li { display: flex; align-items: center; height: 17px; margin-bottom: 3px; }
.tree li:last-child { margin-bottom: 0; }
.tree .twist { width: 14px; margin-right: 3px; padding-right: 2px; }
.twist svg { width: 10px; height: 12px; }
.chip { display: flex; align-items: center; height: 17px; background: #f1f1f1; padding: 0 7px 1px 2px; }
.child .chip { margin-left: 15px; }
.chip button svg { width: 14px; height: 12px; }
.chip .kind { width: 14px; height: 14px; margin: 0 12px 0 7px; }
.chip .kind.short { height: 12px; margin-right: 12px; }
.chip .kind.lead { margin: 0 12px 0 0; }
.appearance { position: absolute; right: 3px; top: 104px; width: 19px; height: 131px; background: #f1f1f1; display: flex; flex-direction: column; align-items: center; gap: 5px; padding: 6px 2px 0 0; font-size: 8px; }
.appearance span { writing-mode: vertical-rl; }
.bottom { position: relative; display: flex; align-items: flex-start; margin-top: auto; padding: 0 3px 3px; border-bottom: 1px solid #d8d8d8; }
.comments { width: 250px; padding-left: 12px; }
.navbar { display: flex; align-items: center; gap: 5px; height: 20px; margin: 1px 0 0 448px; padding: 0 5px 0 2px; background: #f1f1f1; }
.navbar button { gap: 2px; }
.navbar svg { width: 15px; height: 15px; }

.timeline { flex: none; height: 42px; background: #f1f1f1; display: flex; flex-direction: column; }
.hscroll { height: 6px; padding: 1px 5px 0 458px; }
.hscroll div { height: 5px; background: #c9c9c9; border-radius: 0 0 3px 3px; }
.tlrow { display: flex; align-items: flex-start; }
.play { display: flex; gap: 9px; padding: 12px 0 0 8px; }
.play svg { width: 12px; height: 12px; }
.features { display: flex; margin-left: 14px; }
.features li { width: 20px; height: 29px; padding: 5px 2px 0; border-bottom: 1px solid #bbb; background: linear-gradient(#bbb, #bbb) 10px 24px / 1px 4px no-repeat; }
.features svg { width: 16px; height: 16px; }
.features li:last-child { border: 0; }
.features .hot { padding: 3px 0 0 1px; }
.hot span { display: flex; width: 18px; height: 20px; align-items: center; justify-content: center; background: #e8e817; border-radius: 2px; }
.marker { width: 10px; height: 28px; margin-left: -5px; margin-top: 2px; }
.tlgear { margin: 11px 10px 0 auto; }
.tlgear svg { width: 15px; height: 15px; }

.taskbar { flex: none; height: 33px; display: flex; background: #1b2a3d; color: #fff; border-top: 1px solid #111; font-family: "Open Sans", sans-serif; }
.start { width: 40px; }
.start svg { width: 15px; height: 15px; }
.search { width: 286px; display: flex; align-items: center; background: #f2f2f2; padding-left: 10px; }
.lens { width: 14px; height: 14px; }
.search input { flex: 1; min-width: 0; border: 0; background: none; padding: 0 0 0 9px; font: 12px "Open Sans", sans-serif; color: #333; }
.search input::placeholder { color: #333; opacity: 1; }
.art { width: 64px; height: 31px; align-self: flex-end; }
.apps { display: flex; }
.apps button { width: 41px; height: 32px; position: relative; border-bottom: 2px solid transparent; }
.apps svg { width: 21px; height: 21px; }
.apps .running { border-color: #f5c99b; }
.apps .active { background: #46525f; }
.apps b { position: absolute; bottom: 3px; font: bold 5px Roboto, sans-serif; }
.tray { margin-left: auto; display: flex; align-items: center; font-size: 11px; padding-right: 3px; }
.weather { width: 18px; height: 16px; margin-right: 8px; }
.temp { margin-right: 6px; }
.up { width: 11px; height: 8px; margin: 0 8px 0 13px; }
.drop { position: relative; width: 14px; margin-right: 10px; }
.drop svg { width: 14px; height: 13px; }
.drop b { position: absolute; left: 0; bottom: -2px; width: 8px; background: #c8102e; font: bold 7px/8px Roboto, sans-serif; text-align: center; }
.clock { font-size: 10px; line-height: 15px; text-align: center; padding-bottom: 2px; }
.notes { position: relative; width: 20px; justify-content: flex-start; margin: 0 9px 0 17px; }
.notes svg { width: 15px; height: 15px; }
.notes b { position: absolute; right: 0; bottom: -5px; width: 13px; height: 13px; border-radius: 50%; background: #333c48; border: 1px solid #8a929b; font: bold 9px/11px Roboto, sans-serif; }
```
FILE: app.js
```js
const icon = (id, cls) => `<svg${cls ? ` class="${cls}"` : ''}><use href="#${id}"/></svg>`;
const eye = on => `<button aria-label="Toggle visibility">${icon(on ? 'eye' : 'eyeoff')}</button>`;
const parent = (name, open, mid) =>
  `<li><button class="twist" aria-label="Expand">${icon(open ? 'open' : 'closed')}</button><div class="chip">${mid}<span>${name}</span></div></li>`;
const child = (name, on, kind) =>
  `<li class="child"><span class="twist"></span><div class="chip">${eye(on)}${icon(kind, 'kind')}<span>${name}</span></div></li>`;

const bodies = [1, 2, 3, 4, 5, 6, 7].map(n => child('Body' + n, true, 'body'));
// [number, visible, locked]
const sketches = [
  [1, 1, 1], [2, 0, 1], [3, 0, 0], [4, 1, 1], [5, 0, 0], [6, 0, 0], [7, 0, 1], [8, 0, 1], [9, 0, 0], [10, 1, 1],
  [11, 1, 1], [12, 1, 1], [13, 1, 1], [15, 0, 0], [16, 1, 1], [18, 0, 0], [19, 0, 0], [20, 0, 1], [21, 0, 0], [22, 0, 0]
].map(([n, on, lock]) => child('Sketch' + n, on, lock ? 'locked' : 'sketch'));

document.getElementById('tree').innerHTML = [
  parent('Document Settings', false, icon('gear', 'kind lead')),
  parent('Named Views', false, icon('folder', 'kind short lead')),
  parent('Origin', false, eye(false) + icon('folder', 'kind short')),
  parent('Bodies', true, eye(true) + icon('folder', 'kind short')),
  ...bodies,
  parent('Sketches', true, eye(true) + icon('folder', 'kind short')),
  ...sketches
].join('');

// One letter per timeline feature; H is the highlighted sketch.
const kinds = { s: 'sketch', e: 'extrude', p: 'pattern', c: 'plane', o: 'combine', m: 'move' };
const steps = 'sepcssepsesessesssss' + 'epescsesesepseomseomcse' + 'Heses' + 'esesesesesee' + 'semsesessese';
document.getElementById('features').innerHTML = [...steps].map(k =>
  k === 'H' ? `<li class="hot"><span>${icon('sketch')}</span></li>` : `<li>${icon(kinds[k])}</li>`).join('');

// Corrugation ribs: evenly spaced panels whose top and bottom follow the wall's perspective.
function ribs(n, x0, x1, w, top, bottom, fill, line) {
  let out = '';
  for (let i = 0; i < n; i++) {
    const t = i / (n - 1), x = x0 + (x1 - x0) * t;
    const y0 = top[0] + (top[1] - top[0]) * t, y1 = bottom[0] + (bottom[1] - bottom[0]) * t;
    out += `<path d="M${x} ${y0}h${w}V${y1}h${-w}z" fill="${fill}" stroke="#090c1e" stroke-width="${line}"/>` +
      `<path d="M${x + w * 0.68} ${y0}V${y1}" stroke="#090c1e" stroke-width="${line}"/>`;
  }
  return out;
}
document.getElementById('ribs').innerHTML =
  ribs(16, 50, 591, 18, [523, 547], [911, 936], '#374570', 2) +
  ribs(18, 583, 1125, 17, [113, 139], [488, 511], '#33325e', 2) +
  ribs(10, 1156, 1492, 24, [124, 114], [511, 503], '#2b2b58', 3);
```
